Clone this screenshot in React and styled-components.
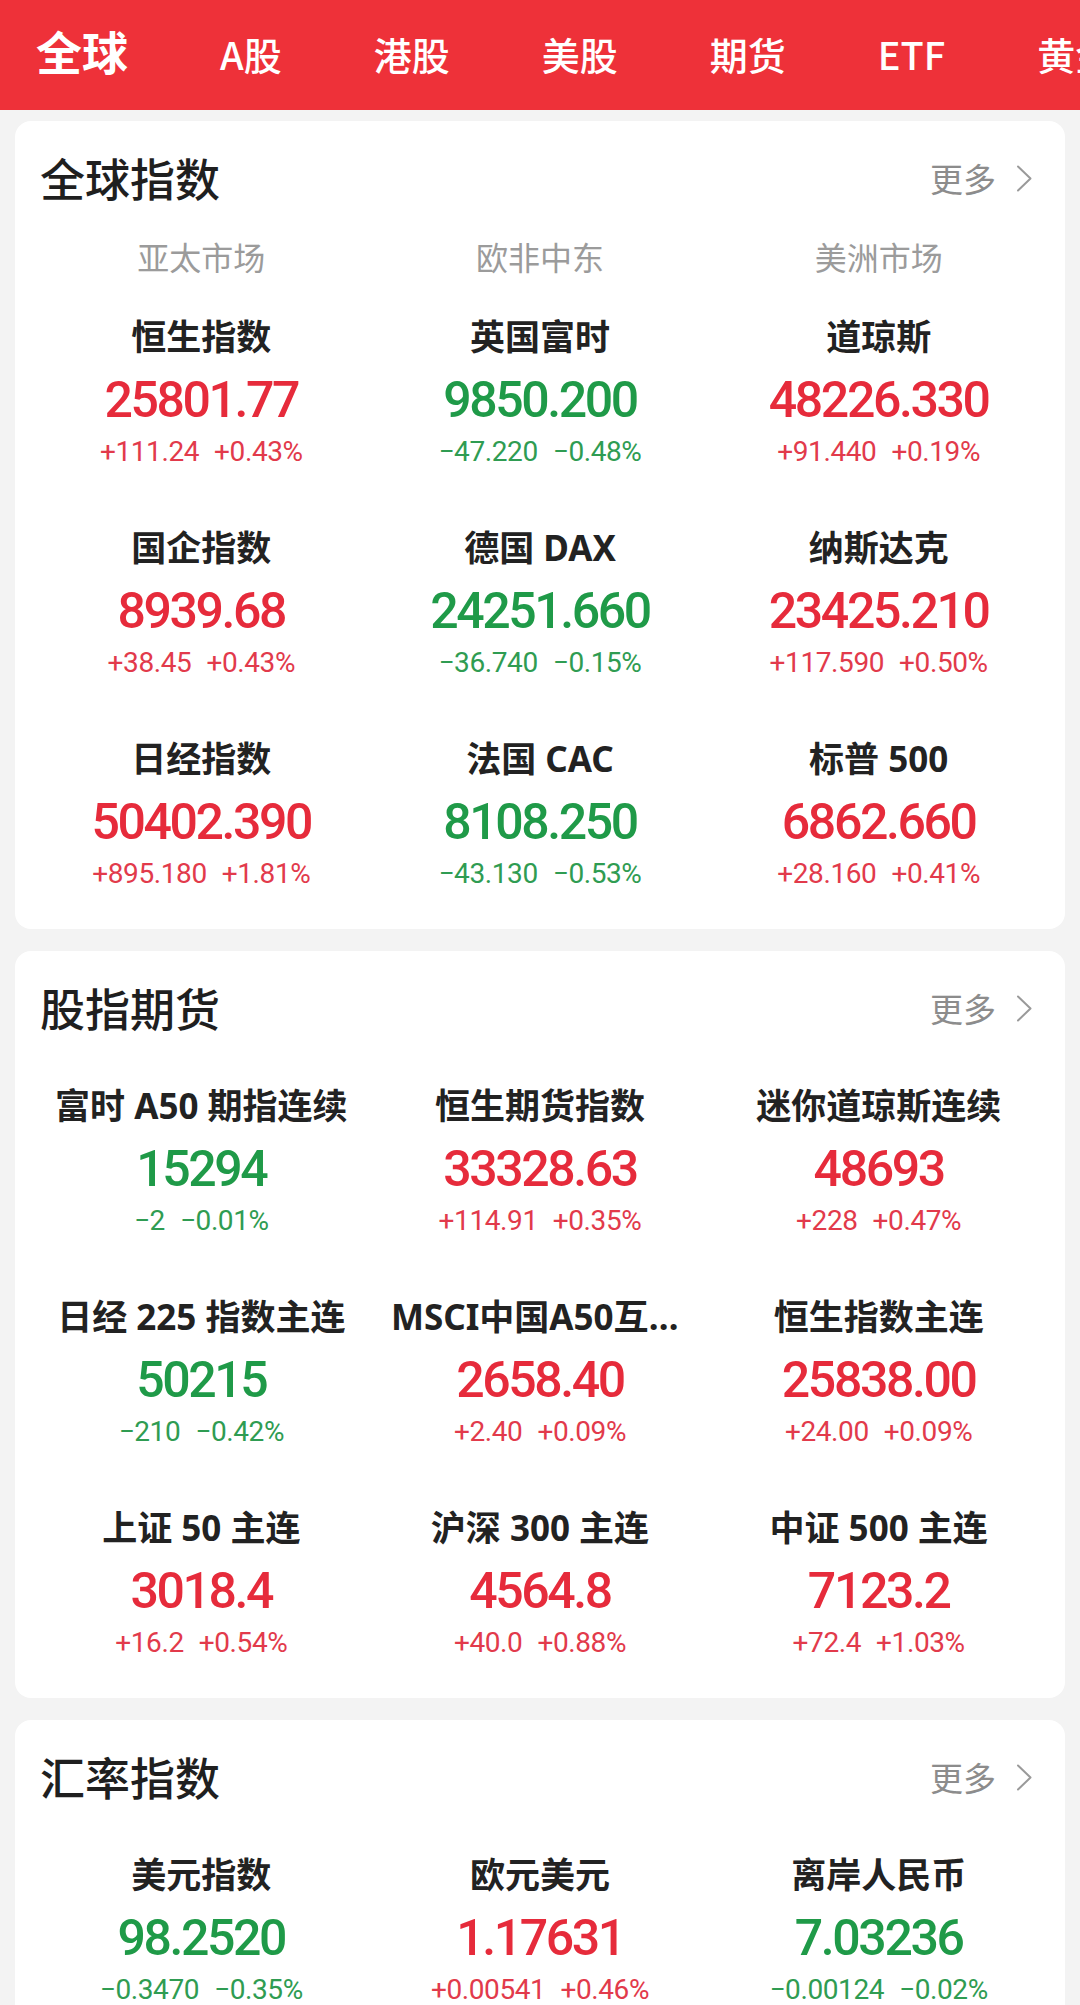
import React from 'react';
import styled, { createGlobalStyle } from 'styled-components';

const GlobalStyle = createGlobalStyle`
  html, body { margin: 0; padding: 0; background: #f3f3f3; }
  body {
    font-family: "Noto Sans CJK SC", "Noto Sans", sans-serif;
    -webkit-font-smoothing: antialiased;
  }
  * { box-sizing: border-box; }
`;

const Page = styled.div`
  width: 1080px;
  min-height: 2005px;
  background: #f3f3f3;
  overflow: hidden;
`;

const TabBar = styled.nav`
  height: 110px;
  background: #ee3139;
  display: flex;
  align-items: baseline;
  gap: 92px;
  padding: 22px 0 0 36px;
  white-space: nowrap;
  overflow: hidden;
`;

const Tab = styled.span`
  flex-shrink: 0;
  color: #fff;
  line-height: 1.25;
  font-size: ${(p) => (p.$active ? '46px' : '38px')};
  font-weight: ${(p) => (p.$active ? 700 : 500)};
`;

const Cards = styled.main`
  display: flex;
  flex-direction: column;
  gap: 22px;
  padding: 11px 15px 0;
`;

const Card = styled.section`
  background: #fff;
  border-radius: 16px;
  padding: 30px 17px 37px;
`;

const TitleRow = styled.header`
  display: flex;
  justify-content: space-between;
  align-items: center;
  height: 66px;
  margin: -6px 0;
  padding: 0 15px 0 8px;
`;

const Title = styled.h2`
  margin: 0;
  font-size: 45px;
  font-weight: 500;
  color: #1f1f1f;
  line-height: 66px;
`;

const More = styled.span`
  display: flex;
  align-items: center;
  gap: 20px;
  font-size: 33px;
  line-height: 48px;
  color: #8c8c8c;
`;

const RegionRow = styled.div`
  display: grid;
  grid-template-columns: repeat(3, 1fr);
  margin-top: 28px;
  height: 46px;
  line-height: 46px;
  text-align: center;
  font-size: 32px;
  color: #9b9b9b;
`;

const Grid = styled.div`
  display: grid;
  grid-template-columns: repeat(3, 1fr);
  row-gap: 53px;
  margin-top: ${(p) => p.$top}px;
`;

const Cell = styled.div`
  display: flex;
  flex-direction: column;
  align-items: center;
  min-width: 0;
`;

const Name = styled.div`
  max-width: 298px;
  font-family: "Noto Sans", "Noto Sans CJK SC", sans-serif;
  font-size: 35px;
  font-weight: 700;
  line-height: 50px;
  color: #222;
  white-space: nowrap;
  overflow: hidden;
  text-overflow: ellipsis;
`;

const Value = styled.div`
  margin-top: 8px;
  font-family: Roboto, "Noto Sans", sans-serif;
  font-size: 50px;
  font-weight: 500;
  line-height: 60px;
  letter-spacing: -2.4px;
  color: ${(p) => (p.$up ? '#e62b3b' : '#1f9a48')};
`;

const Change = styled.div`
  margin-top: 4px;
  display: flex;
  gap: 15px;
  font-family: Roboto, "Noto Sans", sans-serif;
  font-size: 28px;
  line-height: 36px;
  letter-spacing: -0.4px;
  color: ${(p) => (p.$up ? '#e23a4b' : '#2f9c52')};
`;

const Chevron = () => (
  <svg width="17" height="27" viewBox="0 0 17 27" fill="none">
    <polyline points="2,1.5 14.5,13.5 2,25.5" stroke="#9a9a9a" strokeWidth="2" strokeLinecap="round" strokeLinejoin="round" />
  </svg>
);

const tabs = ['全球', 'A股', '港股', '美股', '期货', 'ETF', '黄金'];

const globalIdx = [
  ['恒生指数', '25801.77', '+111.24', '+0.43%'],
  ['英国富时', '9850.200', '−47.220', '−0.48%'],
  ['道琼斯', '48226.330', '+91.440', '+0.19%'],
  ['国企指数', '8939.68', '+38.45', '+0.43%'],
  ['德国 DAX', '24251.660', '−36.740', '−0.15%'],
  ['纳斯达克', '23425.210', '+117.590', '+0.50%'],
  ['日经指数', '50402.390', '+895.180', '+1.81%'],
  ['法国 CAC', '8108.250', '−43.130', '−0.53%'],
  ['标普 500', '6862.660', '+28.160', '+0.41%'],
];

const futures = [
  ['富时 A50 期指连续', '15294', '−2', '−0.01%'],
  ['恒生期货指数', '33328.63', '+114.91', '+0.35%'],
  ['迷你道琼斯连续', '48693', '+228', '+0.47%'],
  ['日经 225 指数主连', '50215', '−210', '−0.42%'],
  ['MSCI中国A50互联互通主连', '2658.40', '+2.40', '+0.09%'],
  ['恒生指数主连', '25838.00', '+24.00', '+0.09%'],
  ['上证 50 主连', '3018.4', '+16.2', '+0.54%'],
  ['沪深 300 主连', '4564.8', '+40.0', '+0.88%'],
  ['中证 500 主连', '7123.2', '+72.4', '+1.03%'],
];

const fx = [
  ['美元指数', '98.2520', '−0.3470', '−0.35%'],
  ['欧元美元', '1.17631', '+0.00541', '+0.46%'],
  ['离岸人民币', '7.03236', '−0.00124', '−0.02%'],
];

const Quote = ({ item }) => {
  const [name, value, chg, pct] = item;
  const up = chg.startsWith('+');
  return (
    <Cell>
      <Name>{name}</Name>
      <Value $up={up}>{value}</Value>
      <Change $up={up}>
        <span>{chg}</span>
        <span>{pct}</span>
      </Change>
    </Cell>
  );
};

const Section = ({ title, regions, items, top }) => (
  <Card>
    <TitleRow>
      <Title>{title}</Title>
      <More>
        更多
        <Chevron />
      </More>
    </TitleRow>
    {regions && (
      <RegionRow>
        {regions.map((r) => (
          <span key={r}>{r}</span>
        ))}
      </RegionRow>
    )}
    <Grid $top={top}>
      {items.map((it) => (
        <Quote key={it[0]} item={it} />
      ))}
    </Grid>
  </Card>
);

export default function App() {
  return (
    <Page>
      <GlobalStyle />
      <TabBar>
        {tabs.map((t, i) => (
          <Tab key={t} $active={i === 0}>
            {t}
          </Tab>
        ))}
      </TabBar>
      <Cards>
        <Section title="全球指数" regions={['亚太市场', '欧非中东', '美洲市场']} items={globalIdx} top={33} />
        <Section title="股指期货" items={futures} top={46} />
        <Section title="汇率指数" items={fx} top={46} />
      </Cards>
    </Page>
  );
}
